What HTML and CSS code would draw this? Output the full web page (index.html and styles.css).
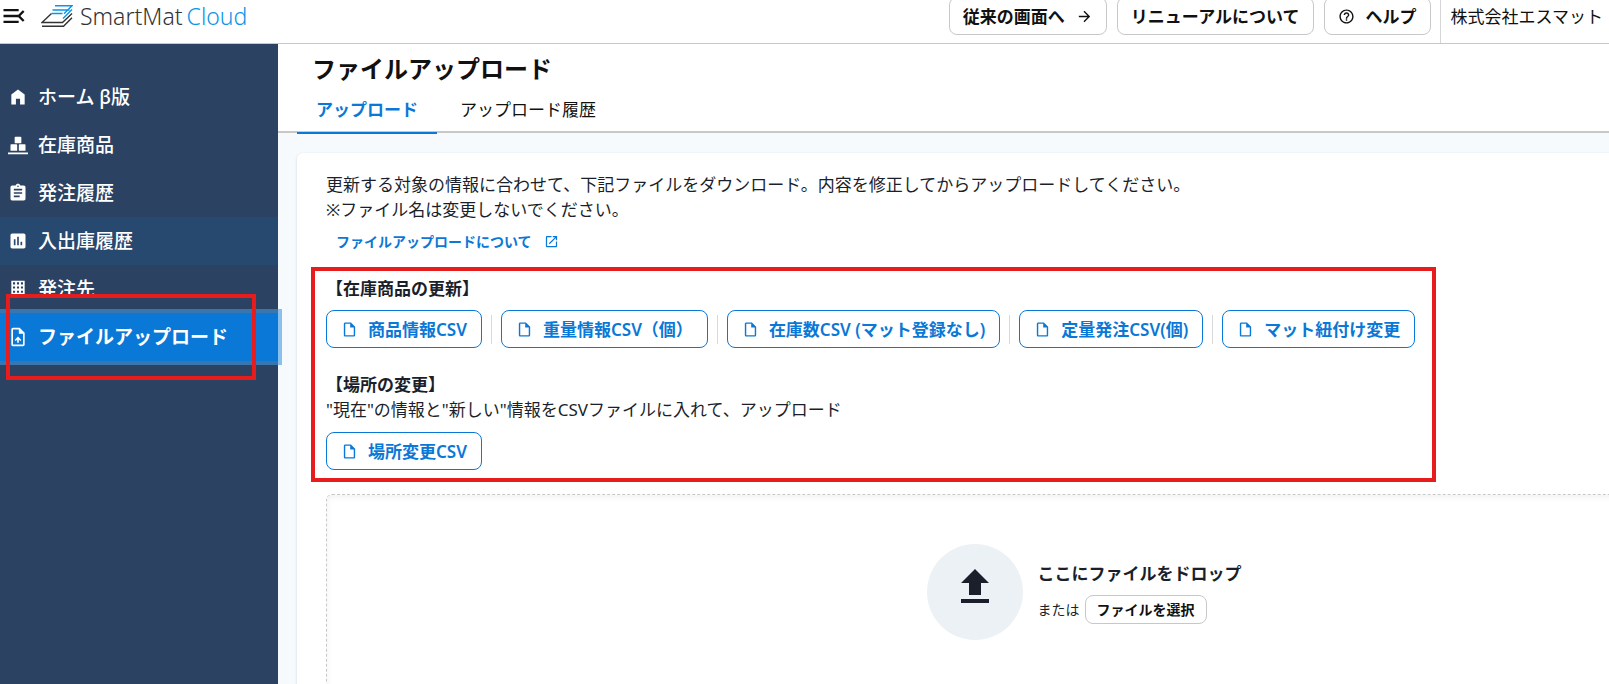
FILE: index.html
```
<!DOCTYPE html>
<html lang="ja">
<head>
    <meta charset="UTF-8">
    <meta name="viewport" content="width=device-width, initial-scale=1.0">
    <title>ファイルアップロード | SmartMat Cloud</title>
    <link rel="stylesheet" href="styles.css">
</head>
<body>
    <svg class="sprite" aria-hidden="true">
        <symbol id="icon-file" viewBox="0 0 24 24">
            <path d="M14 2H6c-1.1 0-2 .9-2 2v16c0 1.1.9 2 2 2h12c1.1 0 2-.9 2-2V8l-6-6zM6 20V4h7v5h5v11H6z"/>
        </symbol>
    </svg>

    <header class="header">
        <button class="menu-btn" type="button" aria-label="メニューを閉じる">
            <svg viewBox="0 0 24 24"><path d="M3 18h13v-2H3v2zm0-5h13v-2H3v2zm0-7v2h13V6H3zm18 9.59L17.42 12 21 8.41 19.59 7l-5 5 5 5L21 15.59z"/></svg>
        </button>
        <a class="logo" href="#">
            <svg class="logo-mark" viewBox="0 0 32 23" fill="none" stroke-width="1.4">
                <path stroke="#333" d="M1 21.3h21.5l8.5-8.5M10.500 8.500 1 17.500h20.500l9.500-9"/>
                <path stroke="#0b94e8" d="M14 .7h17l-8 8M11.500 5h17M10.500 8.500h11M31 4.500l-9 9"/>
            </svg>
            <span class="logo-text">SmartMat<span class="logo-cloud">Cloud</span></span>
        </a>
        <div class="header-actions">
            <button class="btn" type="button">従来の画面へ
                <svg class="icon" viewBox="0 0 24 24"><path d="m12 4-1.410 1.410L16.170 11H4v2h12.170l-5.580 5.590L12 20l8-8z"/></svg>
            </button>
            <button class="btn" type="button">リニューアルについて</button>
            <button class="btn" type="button">
                <svg class="icon" viewBox="0 0 24 24"><path d="M11 18h2v-2h-2v2zm1-16C6.480 2 2 6.480 2 12s4.480 10 10 10 10-4.480 10-10S17.520 2 12 2zm0 18c-4.410 0-8-3.590-8-8s3.590-8 8-8 8 3.590 8 8-3.590 8-8 8zm0-14c-2.210 0-4 1.790-4 4h2c0-1.100.9-2 2-2s2 .9 2 2c0 2-3 1.750-3 5h2c0-2.250 3-2.500 3-5 0-2.210-1.790-4-4-4z"/></svg>
                ヘルプ
            </button>
        </div>
        <div class="company">株式会社エスマット</div>
    </header>

    <div class="layout">
        <nav class="sidebar">
            <a class="nav-item" href="#">
                <svg viewBox="0 0 24 24"><path d="M4 21V9l8-6 8 6v12h-5.500v-7h-5v7z"/></svg>
                ホーム β版
            </a>
            <a class="nav-item" href="#">
                <svg viewBox="0 0 24 24"><path d="M0 21h24v2H0zM9 2h6a1 1 0 0 1 1 1v7H8V3a1 1 0 0 1 1-1zM4 11h6a1 1 0 0 1 1 1v7H3v-7a1 1 0 0 1 1-1zM14 11h6a1 1 0 0 1 1 1v7h-8v-7a1 1 0 0 1 1-1z"/></svg>
                在庫商品
            </a>
            <a class="nav-item" href="#">
                <svg viewBox="0 0 24 24"><path d="M19 3h-4.180C14.400 1.840 13.300 1 12 1s-2.400.84-2.820 2H5c-1.100 0-2 .9-2 2v14c0 1.100.9 2 2 2h14c1.100 0 2-.9 2-2V5c0-1.100-.9-2-2-2zm-7 0c.55 0 1 .45 1 1s-.45 1-1 1-1-.45-1-1 .45-1 1-1zm2 14H7v-2h7v2zm3-4H7v-2h10v2zm0-4H7V7h10v2z"/></svg>
                発注履歴
            </a>
            <a class="nav-item nav-hover" href="#">
                <svg viewBox="0 0 24 24"><path d="M19 3H5c-1.100 0-2 .9-2 2v14c0 1.100.9 2 2 2h14c1.100 0 2-.9 2-2V5c0-1.100-.9-2-2-2zM9 17H7v-7h2v7zm4 0h-2V7h2v10zm4 0h-2v-4h2v4z"/></svg>
                入出庫履歴
            </a>
            <a class="nav-item" href="#">
                <svg viewBox="0 0 24 24"><path fill-rule="evenodd" d="M4 2h16v20H4zM6 4v2.500h2.500V4zM10.750 4v2.500h2.500V4zM15.500 4v2.500H18V4zM6 9v2.500h2.500V9zM10.750 9v2.500h2.500V9zM15.500 9v2.500H18V9zM6 14v2.500h2.500V14zM10.750 14v2.500h2.500V14zM15.500 14v2.500H18V14z"/></svg>
                発注先
            </a>
            <div class="nav-current">
                <a class="nav-item nav-active" href="#" aria-current="page">
                    <svg viewBox="0 0 24 24"><path d="M14 1H6c-1.100 0-2 .9-2 2v18c0 1.100.9 2 2 2h12c1.100 0 2-.9 2-2V7l-6-6zM6 21V3h7v5h5v13H6zM8 15.500l1.300 1.300 1.700-1.700V19h2v-3.900l1.700 1.700L16 15.500l-4-4z"/></svg>
                    ファイルアップロード
                </a>
                <div class="marker marker-nav"></div>
            </div>
        </nav>

        <main class="main">
            <div class="page-head">
                <h1>ファイルアップロード</h1>
                <div class="tabs">
                    <a class="tab tab-active" href="#">アップロード</a>
                    <a class="tab" href="#">アップロード履歴</a>
                </div>
            </div>

            <div class="card">
                <p>更新する対象の情報に合わせて、下記ファイルをダウンロード。内容を修正してからアップロードしてください。</p>
                <p>※ファイル名は変更しないでください。</p>
                <a class="about-link" href="#">ファイルアップロードについて
                    <svg viewBox="0 0 24 24"><path d="M19 19H5V5h7V3H5c-1.110 0-2 .9-2 2v14c0 1.100.89 2 2 2h14c1.100 0 2-.9 2-2v-7h-2v7zM14 3v2h3.590l-9.830 9.830 1.410 1.410L19 6.410V10h2V3h-7z"/></svg>
                </a>

                <div class="downloads">
                    <h2>【在庫商品の更新】</h2>
                    <div class="btn-row">
                        <button class="btn btn-csv" type="button"><svg class="icon"><use href="#icon-file"/></svg>商品情報CSV</button>
                        <span class="divider"></span>
                        <button class="btn btn-csv" type="button"><svg class="icon"><use href="#icon-file"/></svg>重量情報CSV（個）</button>
                        <span class="divider"></span>
                        <button class="btn btn-csv" type="button"><svg class="icon"><use href="#icon-file"/></svg>在庫数CSV (マット登録なし)</button>
                        <span class="divider"></span>
                        <button class="btn btn-csv" type="button"><svg class="icon"><use href="#icon-file"/></svg>定量発注CSV(個)</button>
                        <span class="divider"></span>
                        <button class="btn btn-csv" type="button"><svg class="icon"><use href="#icon-file"/></svg>マット紐付け変更</button>
                    </div>

                    <h2>【場所の変更】</h2>
                    <p>"現在"の情報と"新しい"情報をCSVファイルに入れて、アップロード</p>
                    <div class="btn-row">
                        <button class="btn btn-csv" type="button"><svg class="icon"><use href="#icon-file"/></svg>場所変更CSV</button>
                    </div>
                    <div class="marker marker-downloads"></div>
                </div>

                <div class="dropzone">
                    <div class="drop-icon">
                        <svg viewBox="0 0 24 24"><path d="M5 20h14v-2H5v2zM9 16h6v-6h4l-7-7-7 7h4v6z"/></svg>
                    </div>
                    <div>
                        <p class="drop-title">ここにファイルをドロップ</p>
                        <div class="drop-select">
                            または
                            <button class="btn btn-small" type="button">ファイルを選択</button>
                        </div>
                    </div>
                </div>
            </div>
        </main>
    </div>
</body>
</html>
```
FILE: styles.css
```
* { box-sizing: border-box; }

body {
  margin: 0;
  height: 100vh;
  display: flex;
  flex-direction: column;
  overflow: hidden;
  font-family: "Noto Sans", "Noto Sans CJK JP", sans-serif;
  font-size: 17px;
  line-height: 25px;
  color: #1b1f2b;
  background: #fff;
}

h1, h2, p { margin: 0; }
a { text-decoration: none; }
svg { fill: currentColor; flex: none; }
.sprite { display: none; }

/* Buttons */
.btn {
  display: flex;
  align-items: center;
  gap: 10px;
  height: 38px;
  padding: 0 14px;
  font: inherit;
  font-weight: 600;
  white-space: nowrap;
  color: #111;
  background: #fff;
  border: 1px solid #c8c8c8;
  border-radius: 8px;
}
.icon { width: 17px; height: 17px; }
.btn-csv { color: #0a78d6; border-color: #0a78d6; }
.btn-small { height: 29px; padding: 0 11px; font-size: 14px; }

/* Header */
.header {
  display: flex;
  align-items: stretch;
  flex: none;
  height: 47px;
  margin-top: -3px;
  padding-right: 6px;
  border-bottom: 1px solid #c8c8c8;
  color: #111;
}
.menu-btn {
  width: 28px;
  height: 38px;
  padding: 0;
  border: 0;
  background: none;
  color: #111;
}
.menu-btn svg { display: block; width: 28px; height: 28px; }
.logo { display: flex; align-items: center; height: 38px; margin-left: 13px; gap: 7px; color: #333; }
.logo-mark { width: 32px; height: 23px; fill: none; }
.logo-text { font-size: 23px; font-weight: 300; }
.logo-cloud { margin-left: 4px; color: #0b94e8; }
.header-actions { display: flex; gap: 10px; margin-left: auto; }
.header-actions .btn { gap: 11px; padding: 0 13px; }
.company {
  margin-left: 9px;
  padding: 7px 0 0 10px;
  border-left: 1px solid #d5d5d5;
  white-space: nowrap;
}

.layout { display: flex; flex: 1; min-height: 0; }

/* Sidebar */
.sidebar {
  position: relative;
  z-index: 1;
  flex: none;
  width: 278px;
  padding-top: 29px;
  background: #2c4263;
}
.nav-item {
  display: flex;
  align-items: center;
  gap: 10px;
  height: 48px;
  padding: 0 8px;
  font-size: 19px;
  font-weight: 500;
  color: #fff;
}
.nav-item svg { width: 20px; height: 20px; }
.nav-hover { background: #28496f; }
.nav-active {
  background: #0a78d6;
  font-weight: 700;
  box-shadow: 0 0 0 4px rgba(66, 153, 225, .6);
}
.nav-current { position: relative; }

/* Red frames over the parts to look at */
.marker { position: absolute; border: 4px solid #e71d1d; pointer-events: none; }
.marker-nav { top: -19px; bottom: -19px; left: 6px; width: 250px; }
.marker-downloads { top: -9px; bottom: -12px; left: -15px; right: -21px; }

/* Main */
.main { flex: 1; min-width: 0; overflow: hidden; background: #f6fafd; }
.page-head { padding: 9px 0 0 19px; background: #fff; border-bottom: 2px solid #c8c8c8; }
h1 { padding-left: 15px; font-size: 24px; line-height: 32px; color: #111; }
.tabs { display: flex; gap: 4px; }
.tab {
  height: 49px;
  margin-bottom: -3px;
  padding: 12px 19px 0;
  border-bottom: 2px solid transparent;
  color: #111;
}
.tab-active { font-weight: 700; color: #0a78d6; border-color: #0a78d6; }

/* The card runs on past the right side of the window */
.card {
  margin: 20px -262px 0 19px;
  padding: 19px 29px;
  background: #fff;
  border-radius: 6px;
  box-shadow: 0 1px 3px rgba(0, 0, 0, .15);
}
.about-link {
  display: inline-flex;
  align-items: center;
  gap: 12px;
  height: 38px;
  padding: 0 10px;
  font-size: 14px;
  font-weight: 600;
  color: #0a78d6;
}
.about-link svg { width: 15px; height: 15px; }

.downloads { position: relative; width: fit-content; margin-top: 16px; }
h2 { font-size: 17px; line-height: 25px; }
.btn-row { display: flex; align-items: center; gap: 9px; margin-top: 9px; }
.btn-row + h2 { margin-top: 24px; }
p + .btn-row { margin-top: 10px; }
.divider { width: 1px; height: 29px; background: #d9d9d9; }

.dropzone {
  display: flex;
  align-items: center;
  justify-content: center;
  gap: 15px;
  height: 196px;
  margin-top: 24px;
  border: 1px dashed #c8c8c8;
  border-radius: 6px;
  box-shadow: inset 0 2px 6px rgba(0, 0, 0, .06);
}
.drop-icon {
  display: flex;
  justify-content: center;
  width: 96px;
  height: 96px;
  padding-top: 19px;
  border-radius: 50%;
  background: #ebf1f4;
}
.drop-icon svg { width: 48px; height: 48px; }
.drop-title { font-weight: 700; }
.drop-select { display: flex; align-items: center; gap: 5px; margin-top: 9px; font-size: 14px; }
```
